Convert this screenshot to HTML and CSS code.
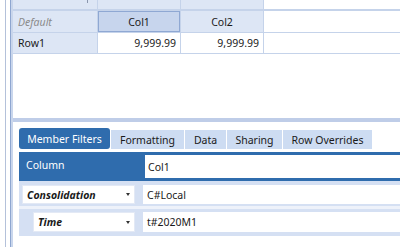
FILE: index.html
```html
<!DOCTYPE html>
<html>
<head>
<meta charset="utf-8">
<link rel="stylesheet" href="styles.css">
</head>
<body>
<div class="app">
  <div class="gutter"><div class="g-line1"></div><div class="g-line2"></div></div>
  <div class="main">
    <div class="grid">
      <div class="row r0">
        <div class="cell hdr c0"><i class="tick"></i></div>
        <div class="cell hdr c1"></div>
        <div class="cell hdr c2"></div>
      </div>
      <div class="row r1">
        <div class="cell hdr c0 dflt">Default</div>
        <div class="cell hdr c1 sel">Col1</div>
        <div class="cell hdr c2 ctr">Col2</div>
      </div>
      <div class="row r2">
        <div class="cell hdr c0">Row1</div>
        <div class="cell c1 num">9,999.99</div>
        <div class="cell c2 num">9,999.99</div>
      </div>
    </div>
    <div class="splitter"></div>
    <div class="panel">
      <div class="tabs">
        <div class="tab active t1">Member Filters</div>
        <div class="tab t2">Formatting</div>
        <div class="tab t3">Data</div>
        <div class="tab t4">Sharing</div>
        <div class="tab t5">Row Overrides</div>
      </div>
      <div class="col-row">
        <div class="col-label">Column</div>
        <div class="col-input">Col1</div>
      </div>
      <div class="frow f1">
        <div class="flabel w1"><span>Consolidation</span><i class="caret"></i></div>
        <div class="fval">C#Local</div>
      </div>
      <div class="sep"></div>
      <div class="frow f2">
        <div class="flabel w2"><span>Time</span><i class="caret"></i></div>
        <div class="fval">t#2020M1</div>
      </div>
    </div>
  </div>
</div>
</body>
</html>
```
FILE: styles.css
```css
html, body { margin: 0; padding: 0; }
body {
  width: 400px; height: 247px; overflow: hidden; background: #fff;
  font-family: "Noto Sans", "Open Sans", sans-serif; font-size: 10.5px; color: #1a1a1a;
}
.app { display: flex; height: 247px; }
.gutter { width: 13px; flex: none; display: flex; }
.g-line1 { width: 1px; margin-left: 5px; background: #b4c1da; }
.g-line2 { width: 3px; margin-left: 4px; background: linear-gradient(to right, #8ea6d0 0 1px, #c9d6ec 1px 3px); }
.main { flex: 1; display: flex; flex-direction: column; min-width: 0; }
.grid { height: 118px; flex: none; }
.row { display: flex; border-bottom: 1px solid #c5d3ea; box-sizing: border-box; }
.r0 { height: 11px; border-bottom-width: 2px; }
.r1 { height: 22px; }
.r2 { height: 21px; }
.cell { box-sizing: border-box; border-right: 1px solid #c5d3ea; display: flex; align-items: center; padding: 0 4px; white-space: nowrap; position: relative; }
.c0 { width: 85px; padding-left: 5px; }
.c1 { width: 83px; }
.c2 { width: 83px; }
.hdr { background: #dde6f5; }
.tick { position: absolute; left: 74px; top: 0; width: 1px; height: 3px; background: #8a96ad; }
.dflt { color: #8b8b8b; font-style: italic; }
.sel { background: #c7d5ed; box-shadow: inset 0 0 0 1px #8fa8d3; justify-content: center; }
.ctr { justify-content: center; }
.num { justify-content: flex-end; padding-right: 4px; }
.splitter { height: 4px; flex: none; background: #bfcde8; }
.panel { flex: 1; padding-left: 6px; display: flex; flex-direction: column; }
.tabs { display: flex; align-items: flex-end; margin-top: 6px; height: 21px; gap: 1px; }
.tab { height: 19px; background: #cddcf2; display: flex; align-items: center; justify-content: center; box-sizing: border-box; }
.tab.active { height: 21px; background: #2f6cad; color: #fff; border-radius: 3px; }
.t1 { width: 91px; }
.t2 { width: 73px; }
.t3 { width: 41px; }
.t4 { width: 55px; }
.t5 { width: 89px; }
.col-row { margin-top: 3px; height: 29px; background: #2f6cad; display: flex; padding: 3px 0; box-sizing: border-box; }
.col-label { width: 126px; color: #fff; padding-left: 7px; display: flex; align-items: center; box-sizing: border-box; margin-top: -3px; }
.col-input { flex: 1; background: #fff; padding-left: 3px; display: flex; align-items: center; }
.frow { display: flex; background: #d5e0f3; box-sizing: border-box; }
.f1 { height: 25px; padding: 4px 0 2px 3px; }
.f2 { height: 27px; padding: 3px 0 4px 14px; }
.sep { height: 3px; background: #eef2fa; }
.flabel { background: #fff; border: 1px solid #e3e9f5; box-sizing: border-box; display: flex; align-items: center; justify-content: space-between; padding: 0 4px 0 4px; font-weight: bold; font-style: italic; }
.w1 { width: 113px; }
.w2 { width: 102px; }
.caret { width: 0; height: 0; border-left: 2.5px solid transparent; border-right: 2.5px solid transparent; border-top: 3px solid #333; }
.fval { flex: 1; margin-left: 8px; background: #fff; display: flex; align-items: center; padding-left: 4px; }
```
